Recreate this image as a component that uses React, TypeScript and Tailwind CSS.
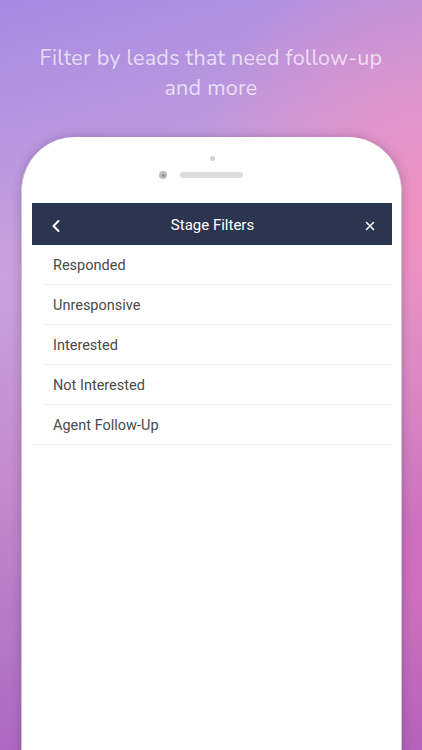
import { ChevronLeft, X } from "lucide-react";

const stages = ["Responded", "Unresponsive", "Interested", "Not Interested", "Agent Follow-Up"];

export default function App() {
  return (
    <div className="relative h-[750px] w-[422px] overflow-hidden bg-[radial-gradient(ellipse_55%_40%_at_100%_30%,#f08fbf_0%,rgba(240,143,191,0)_100%),radial-gradient(ellipse_40%_40%_at_100%_75%,rgba(215,110,185,0.8)_0%,rgba(215,110,185,0)_100%),linear-gradient(165deg,#a68ae2_0%,#c9a2dc_32%,#c38ccd_55%,#a45bbb_100%)]">
      {/* Headline */}
      <div className="pt-[43px] text-center font-['Nunito','Lato',sans-serif] text-[21.5px] leading-[30px] tracking-[0.25px] text-white/70">
        <p>Filter by leads that need follow-up</p>
        <p>and more</p>
      </div>

      {/* Phone */}
      <div className="mx-[21px] mt-[34px] h-[620px] w-[381px] rounded-t-[54px] border-x border-[#cdc6d0] bg-white pl-[10px] pr-[9px] shadow-[0_0_10px_rgba(70,40,90,0.3)]">
        <div className="flex h-[66px] flex-col items-center pt-[19px]">
          <div className="h-[5px] w-[5px] rounded-full bg-[#d2d2d2]" />
          <div className="mt-[10px] flex items-center gap-[13px] pr-[22px]">
            <div className="flex h-[8px] w-[8px] items-center justify-center rounded-full bg-[#bdbdbd]">
              <div className="h-[3px] w-[3px] rounded-full bg-[#8a8a8a]" />
            </div>
            <div className="h-[6px] w-[63px] rounded-full bg-[#dcdcdc]" />
          </div>
        </div>

        {/* Screen */}
        <div className="font-['Roboto','Liberation_Sans',sans-serif]">
          <div className="flex h-[42px] items-center justify-between bg-[#2b3550] pl-[14px] pr-[15px] pt-[3px] text-white">
            <ChevronLeft className="h-[20px] w-[20px]" strokeWidth={2.4} />
            <span className="mr-[4px] text-[15px]">Stage Filters</span>
            <X className="h-[14px] w-[14px]" strokeWidth={2.6} />
          </div>
          <ul>
            {stages.map((s, i) => (
              <li
                key={s}
                className={`flex h-[40px] items-center border-b border-[#ececec] pt-[2px] text-[14.5px] text-[#4a4a4a] ${
                  i === stages.length - 1 ? "pl-[21px]" : "ml-[12px] pl-[9px]"
                }`}
              >
                {s}
              </li>
            ))}
          </ul>
        </div>
      </div>
    </div>
  );
}
